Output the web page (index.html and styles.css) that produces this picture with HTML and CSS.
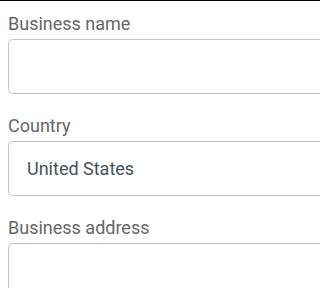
FILE: index.html
```html
<!DOCTYPE html>
<html>
<head>
<meta charset="utf-8">
<link rel="stylesheet" href="styles.css">
</head>
<body>
<div class="topbar"></div>
<form class="form">
  <div class="field">
    <label class="label">Business name</label>
    <div class="box"></div>
  </div>
  <div class="field">
    <label class="label">Country</label>
    <div class="box"><span class="value">United States</span></div>
  </div>
  <div class="field">
    <label class="label">Business address</label>
    <div class="box"></div>
  </div>
</form>
</body>
</html>
```

FILE: styles.css
```css
html, body {
  margin: 0;
  padding: 0;
  background: #fff;
}
body {
  overflow: hidden;
}
.topbar {
  height: 1px;
  background: #000;
}
.form {
  padding: 12px 0 0 8px;
  display: flex;
  flex-direction: column;
  gap: 21px;
  font-family: Roboto, "Liberation Sans", sans-serif;
}
.field {
  display: flex;
  flex-direction: column;
  gap: 5px;
}
.label {
  font-size: 18px;
  line-height: 21px;
  color: #666;
}
.box {
  box-sizing: border-box;
  height: 55px;
  border: 1px solid #c4c4c4;
  border-right: none;
  border-radius: 5px 0 0 5px;
  display: flex;
  align-items: center;
  padding-left: 18px;
}
.value {
  font-size: 18px;
  color: #44535b;
}
```
